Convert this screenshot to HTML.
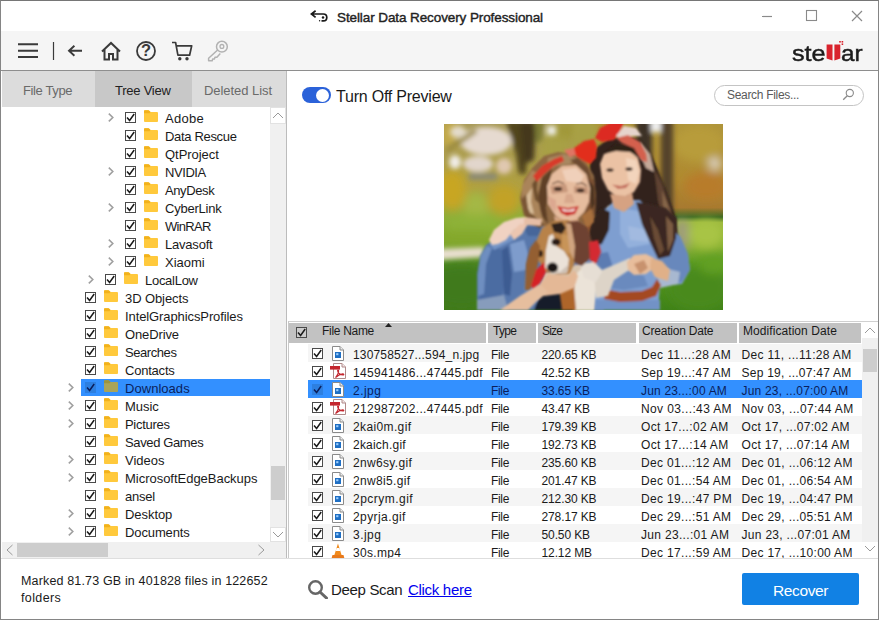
<!DOCTYPE html>
<html><head><meta charset="utf-8"><title>Stellar Data Recovery Professional</title>
<style>
*{box-sizing:border-box;margin:0;padding:0}
html,body{width:879px;height:620px;overflow:hidden;background:#fff}
body{font-family:"Liberation Sans",sans-serif;position:relative;color:#1a1a1a}
.ab{position:absolute;display:block}
.t{position:absolute;white-space:nowrap;display:block}
.tr{font-size:13px;line-height:18px}
.fr{font-size:12px;line-height:17px}
.cb{position:absolute;display:block}
.cb rect{fill:#fff;stroke:#4a4a4a;stroke-width:1}
.cb path{fill:none;stroke:#1a1a1a;stroke-width:1.5}
.cb.sel rect{fill:#2d7fe0;stroke:#2d7fe0}
.cb.sel path{stroke:#0b1f5c}
</style></head><body>
<!-- window frame -->
<div class="ab" style="left:0;top:0;width:879px;height:620px;border:1px solid #858585;border-top-color:#767676"></div>
<!-- title bar -->
<svg class="ab" style="left:310px;top:9px" width="19" height="14" viewBox="0 0 19 14"><path d="M5.600 1.800 1.400 5 5.600 8.400M1.800 5H13.300Q16.800 5 16.800 8.400Q16.800 11.800 13.300 11.800H11.500" fill="none" stroke="#1a1a1a" stroke-width="1.700"/><circle cx="13" cy="8.400" r="1.250" fill="#1a1a1a"/><circle cx="9.600" cy="11.700" r=".700" fill="#1a1a1a"/></svg>
<span class="t" id="title" style="left:337px;top:8.500px;font-size:13.500px;line-height:18px;color:#222;-webkit-text-stroke:.4px #222;letter-spacing:-0.098px;">Stellar Data Recovery Professional</span>
<svg class="ab" style="left:756px;top:6px" width="112" height="20" viewBox="0 0 112 20"><path d="M6 10.5H16" stroke="#8a8a8a" stroke-width="1.2"/><rect x="50.5" y="4.5" width="10" height="10" fill="none" stroke="#8a8a8a" stroke-width="1.1"/><path d="M96 5 106 15M106 5 96 15" stroke="#8a8a8a" stroke-width="1.2"/></svg>
<!-- toolbar -->
<div class="ab" style="left:1px;top:31px;width:877px;height:39px;background:#f5f5f5"></div>
<div class="ab" style="left:1px;top:70px;width:877px;height:1px;background:#8e8e8e"></div>
<svg class="ab" style="left:14px;top:38px" width="220" height="28" viewBox="0 0 220 28">
 <g fill="none" stroke="#3a3a3a" stroke-width="1.8">
  <path d="M4 6.300H24M4 12.750H24M4 19H24" stroke-width="2.100"/>
  <path d="M39.5 4V22" stroke-width="1.2"/>
  <path d="M68 12.750H55.500M60.400 7.700 55 12.750 60.400 17.800" stroke-width="1.900"/>
  <path d="M88 13.500 97 5 106 13.500M90.500 11.500V21.500H95V16H99V21.500H103.500V11.500" stroke-width="2"/>
  <circle cx="132" cy="13" r="9"/>
  <path d="M158 4.500H161.600L163.900 17.200H175.600L177.700 7.800H162.400" stroke-linejoin="round" stroke-width="1.700"/>
 </g>
 <circle cx="165.800" cy="20.800" r="1.700" fill="#3a3a3a"/><circle cx="173" cy="20.800" r="1.700" fill="#3a3a3a"/>
 <text x="132" y="18" text-anchor="middle" font-family="Liberation Sans, sans-serif" font-size="16.500" font-weight="bold" fill="#3a3a3a">?</text>
 <g fill="none" stroke="#b2b2b2" stroke-width="1.500" stroke-linejoin="round"><circle cx="207.900" cy="8.700" r="5.400"/><circle cx="207.900" cy="8.400" r="1.900" stroke-width="1.300"/><path d="M203.600 12 194.600 20.300V22.700H198.200L198.700 20.900H200.500L201 19.200H202.900L206.300 15.400"/></g>
</svg>
<!-- stellar logo -->
<span class="t" id="logo1" style="left:791.500px;top:39.500px;font-size:22.500px;line-height:28px;color:#1c1c1c;-webkit-text-stroke:.45px #1c1c1c;transform-origin:0 0;transform:scaleX(1.12)">ste</span>
<span class="t" id="logo2" style="left:841px;top:39.500px;font-size:22.500px;line-height:28px;color:#1c1c1c;-webkit-text-stroke:.45px #1c1c1c;transform-origin:0 0;transform:scaleX(1.08)">ar</span>
<svg class="ab" style="left:825px;top:39px" width="20" height="23" viewBox="0 0 20 23"><path d="M1.600 5.500H7.500V21.500L1.600 19.500Z" fill="#d9232d"/><path d="M9.400 5.500H15.300V19.500L9.400 21.500Z" fill="#d9232d"/><rect x="14.200" y="2" width="1.600" height="1.600" fill="#d9232d"/><rect x="16.600" y="2" width="1.600" height="1.600" fill="#d9232d"/><rect x="16.600" y="4.400" width="1.600" height="1.600" fill="#d9232d"/></svg>
<!-- tabs -->
<div class="ab" style="left:2px;top:71px;width:284px;height:36px;background:#dcdcdc"></div>
<div class="ab" style="left:95px;top:71px;width:97px;height:36px;background:#c8c8c8"></div>
<span class="t" id="tab1" style="left:23px;top:81.700px;font-size:13px;line-height:18px;color:#6a6a6a;letter-spacing:-0.368px;">File Type</span>
<span class="t" id="tab2" style="left:115px;top:81.700px;font-size:13px;line-height:18px;color:#222;letter-spacing:-0.246px;">Tree View</span>
<span class="t" id="tab3" style="left:204px;top:81.700px;font-size:13px;line-height:18px;color:#6a6a6a;letter-spacing:-0.055px;">Deleted List</span>
<!-- pane divider -->
<div class="ab" style="left:286px;top:71px;width:1px;height:488px;background:#bcbcbc"></div>
<!-- tree -->
<svg class="ab" style="left:108px;top:113px" width="6" height="9" viewBox="0 0 6 9"><path d="M.8 .6 4.8 4.5 .8 8.4" fill="none" stroke="#a0a0a0" stroke-width="1.6"/></svg>
<svg class="cb" style="left:125px;top:112px" width="11" height="11" viewBox="0 0 11 11"><rect x=".5" y=".5" width="10" height="10"/><path d="M2 5.4 4.6 8.5 9.2 2"/></svg>
<svg class="ab" style="left:144px;top:110px" width="14" height="12" viewBox="0 0 15 13" preserveAspectRatio="none"><path d="M0 1.2Q0 .2 1 .2H4.6Q5.4 .2 6 1L7 2.2H14Q15 2.2 15 3.2V12Q15 13 14 13H1Q0 13 0 12Z" fill="#ffc93c"/><path d="M0 1.2Q0 .2 1 .2H4.6Q5.4 .2 6 1L7 2.2L6 3.4H0Z" fill="#f2b21c"/></svg>
<span class="t tr" style="left:165px;top:110px;color:#1a1a1a;letter-spacing:0.281px;">Adobe</span>
<svg class="cb" style="left:125px;top:130px" width="11" height="11" viewBox="0 0 11 11"><rect x=".5" y=".5" width="10" height="10"/><path d="M2 5.4 4.6 8.5 9.2 2"/></svg>
<svg class="ab" style="left:144px;top:128px" width="14" height="12" viewBox="0 0 15 13" preserveAspectRatio="none"><path d="M0 1.2Q0 .2 1 .2H4.6Q5.4 .2 6 1L7 2.2H14Q15 2.2 15 3.2V12Q15 13 14 13H1Q0 13 0 12Z" fill="#ffc93c"/><path d="M0 1.2Q0 .2 1 .2H4.6Q5.4 .2 6 1L7 2.2L6 3.4H0Z" fill="#f2b21c"/></svg>
<span class="t tr" style="left:165px;top:128px;color:#1a1a1a;letter-spacing:-0.323px;">Data Rescue</span>
<svg class="cb" style="left:125px;top:148px" width="11" height="11" viewBox="0 0 11 11"><rect x=".5" y=".5" width="10" height="10"/><path d="M2 5.4 4.6 8.5 9.2 2"/></svg>
<svg class="ab" style="left:144px;top:146px" width="14" height="12" viewBox="0 0 15 13" preserveAspectRatio="none"><path d="M0 1.2Q0 .2 1 .2H4.6Q5.4 .2 6 1L7 2.2H14Q15 2.2 15 3.2V12Q15 13 14 13H1Q0 13 0 12Z" fill="#ffc93c"/><path d="M0 1.2Q0 .2 1 .2H4.6Q5.4 .2 6 1L7 2.2L6 3.4H0Z" fill="#f2b21c"/></svg>
<span class="t tr" style="left:165px;top:146px;color:#1a1a1a;letter-spacing:-0.043px;">QtProject</span>
<svg class="ab" style="left:108px;top:167px" width="6" height="9" viewBox="0 0 6 9"><path d="M.8 .6 4.8 4.5 .8 8.4" fill="none" stroke="#a0a0a0" stroke-width="1.6"/></svg>
<svg class="cb" style="left:125px;top:166px" width="11" height="11" viewBox="0 0 11 11"><rect x=".5" y=".5" width="10" height="10"/><path d="M2 5.4 4.6 8.5 9.2 2"/></svg>
<svg class="ab" style="left:144px;top:164px" width="14" height="12" viewBox="0 0 15 13" preserveAspectRatio="none"><path d="M0 1.2Q0 .2 1 .2H4.6Q5.4 .2 6 1L7 2.2H14Q15 2.2 15 3.2V12Q15 13 14 13H1Q0 13 0 12Z" fill="#ffc93c"/><path d="M0 1.2Q0 .2 1 .2H4.6Q5.4 .2 6 1L7 2.2L6 3.4H0Z" fill="#f2b21c"/></svg>
<span class="t tr" style="left:165px;top:164px;color:#1a1a1a;letter-spacing:-0.424px;">NVIDIA</span>
<svg class="cb" style="left:125px;top:184px" width="11" height="11" viewBox="0 0 11 11"><rect x=".5" y=".5" width="10" height="10"/><path d="M2 5.4 4.6 8.5 9.2 2"/></svg>
<svg class="ab" style="left:144px;top:182px" width="14" height="12" viewBox="0 0 15 13" preserveAspectRatio="none"><path d="M0 1.2Q0 .2 1 .2H4.6Q5.4 .2 6 1L7 2.2H14Q15 2.2 15 3.2V12Q15 13 14 13H1Q0 13 0 12Z" fill="#ffc93c"/><path d="M0 1.2Q0 .2 1 .2H4.6Q5.4 .2 6 1L7 2.2L6 3.4H0Z" fill="#f2b21c"/></svg>
<span class="t tr" style="left:165px;top:182px;color:#1a1a1a;letter-spacing:-0.390px;">AnyDesk</span>
<svg class="ab" style="left:108px;top:203px" width="6" height="9" viewBox="0 0 6 9"><path d="M.8 .6 4.8 4.5 .8 8.4" fill="none" stroke="#a0a0a0" stroke-width="1.6"/></svg>
<svg class="cb" style="left:125px;top:202px" width="11" height="11" viewBox="0 0 11 11"><rect x=".5" y=".5" width="10" height="10"/><path d="M2 5.4 4.6 8.5 9.2 2"/></svg>
<svg class="ab" style="left:144px;top:200px" width="14" height="12" viewBox="0 0 15 13" preserveAspectRatio="none"><path d="M0 1.2Q0 .2 1 .2H4.6Q5.4 .2 6 1L7 2.2H14Q15 2.2 15 3.2V12Q15 13 14 13H1Q0 13 0 12Z" fill="#ffc93c"/><path d="M0 1.2Q0 .2 1 .2H4.6Q5.4 .2 6 1L7 2.2L6 3.4H0Z" fill="#f2b21c"/></svg>
<span class="t tr" style="left:165px;top:200px;color:#1a1a1a;letter-spacing:-0.237px;">CyberLink</span>
<svg class="cb" style="left:125px;top:220px" width="11" height="11" viewBox="0 0 11 11"><rect x=".5" y=".5" width="10" height="10"/><path d="M2 5.4 4.6 8.5 9.2 2"/></svg>
<svg class="ab" style="left:144px;top:218px" width="14" height="12" viewBox="0 0 15 13" preserveAspectRatio="none"><path d="M0 1.2Q0 .2 1 .2H4.6Q5.4 .2 6 1L7 2.2H14Q15 2.2 15 3.2V12Q15 13 14 13H1Q0 13 0 12Z" fill="#ffc93c"/><path d="M0 1.2Q0 .2 1 .2H4.6Q5.4 .2 6 1L7 2.2L6 3.4H0Z" fill="#f2b21c"/></svg>
<span class="t tr" style="left:165px;top:218px;color:#1a1a1a;letter-spacing:-0.707px;">WinRAR</span>
<svg class="ab" style="left:108px;top:239px" width="6" height="9" viewBox="0 0 6 9"><path d="M.8 .6 4.8 4.5 .8 8.4" fill="none" stroke="#a0a0a0" stroke-width="1.6"/></svg>
<svg class="cb" style="left:125px;top:238px" width="11" height="11" viewBox="0 0 11 11"><rect x=".5" y=".5" width="10" height="10"/><path d="M2 5.4 4.6 8.5 9.2 2"/></svg>
<svg class="ab" style="left:144px;top:236px" width="14" height="12" viewBox="0 0 15 13" preserveAspectRatio="none"><path d="M0 1.2Q0 .2 1 .2H4.6Q5.4 .2 6 1L7 2.2H14Q15 2.2 15 3.2V12Q15 13 14 13H1Q0 13 0 12Z" fill="#ffc93c"/><path d="M0 1.2Q0 .2 1 .2H4.6Q5.4 .2 6 1L7 2.2L6 3.4H0Z" fill="#f2b21c"/></svg>
<span class="t tr" style="left:165px;top:236px;color:#1a1a1a;letter-spacing:-0.207px;">Lavasoft</span>
<svg class="ab" style="left:108px;top:257px" width="6" height="9" viewBox="0 0 6 9"><path d="M.8 .6 4.8 4.5 .8 8.4" fill="none" stroke="#a0a0a0" stroke-width="1.6"/></svg>
<svg class="cb" style="left:125px;top:256px" width="11" height="11" viewBox="0 0 11 11"><rect x=".5" y=".5" width="10" height="10"/><path d="M2 5.4 4.6 8.5 9.2 2"/></svg>
<svg class="ab" style="left:144px;top:254px" width="14" height="12" viewBox="0 0 15 13" preserveAspectRatio="none"><path d="M0 1.2Q0 .2 1 .2H4.6Q5.4 .2 6 1L7 2.2H14Q15 2.2 15 3.2V12Q15 13 14 13H1Q0 13 0 12Z" fill="#ffc93c"/><path d="M0 1.2Q0 .2 1 .2H4.6Q5.4 .2 6 1L7 2.2L6 3.4H0Z" fill="#f2b21c"/></svg>
<span class="t tr" style="left:165px;top:254px;color:#1a1a1a;letter-spacing:-0.008px;">Xiaomi</span>
<svg class="ab" style="left:88px;top:275px" width="6" height="9" viewBox="0 0 6 9"><path d="M.8 .6 4.8 4.5 .8 8.4" fill="none" stroke="#a0a0a0" stroke-width="1.6"/></svg>
<svg class="cb" style="left:105px;top:274px" width="11" height="11" viewBox="0 0 11 11"><rect x=".5" y=".5" width="10" height="10"/><path d="M2 5.4 4.6 8.5 9.2 2"/></svg>
<svg class="ab" style="left:124px;top:272px" width="14" height="12" viewBox="0 0 15 13" preserveAspectRatio="none"><path d="M0 1.2Q0 .2 1 .2H4.6Q5.4 .2 6 1L7 2.2H14Q15 2.2 15 3.2V12Q15 13 14 13H1Q0 13 0 12Z" fill="#ffc93c"/><path d="M0 1.2Q0 .2 1 .2H4.6Q5.4 .2 6 1L7 2.2L6 3.4H0Z" fill="#f2b21c"/></svg>
<span class="t tr" style="left:145px;top:272px;color:#1a1a1a;letter-spacing:-0.280px;">LocalLow</span>
<svg class="cb" style="left:85px;top:292px" width="11" height="11" viewBox="0 0 11 11"><rect x=".5" y=".5" width="10" height="10"/><path d="M2 5.4 4.6 8.5 9.2 2"/></svg>
<svg class="ab" style="left:104px;top:290px" width="14" height="12" viewBox="0 0 15 13" preserveAspectRatio="none"><path d="M0 1.2Q0 .2 1 .2H4.6Q5.4 .2 6 1L7 2.2H14Q15 2.2 15 3.2V12Q15 13 14 13H1Q0 13 0 12Z" fill="#ffc93c"/><path d="M0 1.2Q0 .2 1 .2H4.6Q5.4 .2 6 1L7 2.2L6 3.4H0Z" fill="#f2b21c"/></svg>
<span class="t tr" style="left:125px;top:290px;color:#1a1a1a;letter-spacing:-0.091px;">3D Objects</span>
<svg class="cb" style="left:85px;top:310px" width="11" height="11" viewBox="0 0 11 11"><rect x=".5" y=".5" width="10" height="10"/><path d="M2 5.4 4.6 8.5 9.2 2"/></svg>
<svg class="ab" style="left:104px;top:308px" width="14" height="12" viewBox="0 0 15 13" preserveAspectRatio="none"><path d="M0 1.2Q0 .2 1 .2H4.6Q5.4 .2 6 1L7 2.2H14Q15 2.2 15 3.2V12Q15 13 14 13H1Q0 13 0 12Z" fill="#ffc93c"/><path d="M0 1.2Q0 .2 1 .2H4.6Q5.4 .2 6 1L7 2.2L6 3.4H0Z" fill="#f2b21c"/></svg>
<span class="t tr" style="left:125px;top:308px;color:#1a1a1a;letter-spacing:-0.098px;">IntelGraphicsProfiles</span>
<svg class="cb" style="left:85px;top:328px" width="11" height="11" viewBox="0 0 11 11"><rect x=".5" y=".5" width="10" height="10"/><path d="M2 5.4 4.6 8.5 9.2 2"/></svg>
<svg class="ab" style="left:104px;top:326px" width="14" height="12" viewBox="0 0 15 13" preserveAspectRatio="none"><path d="M0 1.2Q0 .2 1 .2H4.6Q5.4 .2 6 1L7 2.2H14Q15 2.2 15 3.2V12Q15 13 14 13H1Q0 13 0 12Z" fill="#ffc93c"/><path d="M0 1.2Q0 .2 1 .2H4.6Q5.4 .2 6 1L7 2.2L6 3.4H0Z" fill="#f2b21c"/></svg>
<span class="t tr" style="left:125px;top:326px;color:#1a1a1a;letter-spacing:-0.128px;">OneDrive</span>
<svg class="cb" style="left:85px;top:346px" width="11" height="11" viewBox="0 0 11 11"><rect x=".5" y=".5" width="10" height="10"/><path d="M2 5.4 4.6 8.5 9.2 2"/></svg>
<svg class="ab" style="left:104px;top:344px" width="14" height="12" viewBox="0 0 15 13" preserveAspectRatio="none"><path d="M0 1.2Q0 .2 1 .2H4.6Q5.4 .2 6 1L7 2.2H14Q15 2.2 15 3.2V12Q15 13 14 13H1Q0 13 0 12Z" fill="#ffc93c"/><path d="M0 1.2Q0 .2 1 .2H4.6Q5.4 .2 6 1L7 2.2L6 3.4H0Z" fill="#f2b21c"/></svg>
<span class="t tr" style="left:125px;top:344px;color:#1a1a1a;letter-spacing:-0.428px;">Searches</span>
<svg class="cb" style="left:85px;top:364px" width="11" height="11" viewBox="0 0 11 11"><rect x=".5" y=".5" width="10" height="10"/><path d="M2 5.4 4.6 8.5 9.2 2"/></svg>
<svg class="ab" style="left:104px;top:362px" width="14" height="12" viewBox="0 0 15 13" preserveAspectRatio="none"><path d="M0 1.2Q0 .2 1 .2H4.6Q5.4 .2 6 1L7 2.2H14Q15 2.2 15 3.2V12Q15 13 14 13H1Q0 13 0 12Z" fill="#ffc93c"/><path d="M0 1.2Q0 .2 1 .2H4.6Q5.4 .2 6 1L7 2.2L6 3.4H0Z" fill="#f2b21c"/></svg>
<span class="t tr" style="left:125px;top:362px;color:#1a1a1a;letter-spacing:-0.214px;">Contacts</span>
<div class="ab" style="left:81px;top:379px;width:189px;height:17px;background:#3390ff"></div>
<svg class="ab" style="left:68px;top:383px" width="6" height="9" viewBox="0 0 6 9"><path d="M.8 .6 4.8 4.5 .8 8.4" fill="none" stroke="#a0a0a0" stroke-width="1.6"/></svg>
<svg class="cb sel" style="left:85px;top:382px" width="11" height="11" viewBox="0 0 11 11"><rect x=".5" y=".5" width="10" height="10"/><path d="M2 5.4 4.6 8.5 9.2 2"/></svg>
<svg class="ab" style="left:104px;top:380px" width="14" height="12" viewBox="0 0 15 13" preserveAspectRatio="none"><path d="M0 1.2Q0 .2 1 .2H4.6Q5.4 .2 6 1L7 2.2H14Q15 2.2 15 3.2V12Q15 13 14 13H1Q0 13 0 12Z" fill="#a9a45a"/><path d="M0 1.2Q0 .2 1 .2H4.6Q5.4 .2 6 1L7 2.2L6 3.4H0Z" fill="#9a9440"/></svg>
<span class="t tr" style="left:125px;top:380px;color:#0b1f5c;letter-spacing:0.041px;">Downloads</span>
<svg class="ab" style="left:68px;top:401px" width="6" height="9" viewBox="0 0 6 9"><path d="M.8 .6 4.8 4.5 .8 8.4" fill="none" stroke="#a0a0a0" stroke-width="1.6"/></svg>
<svg class="cb" style="left:85px;top:400px" width="11" height="11" viewBox="0 0 11 11"><rect x=".5" y=".5" width="10" height="10"/><path d="M2 5.4 4.6 8.5 9.2 2"/></svg>
<svg class="ab" style="left:104px;top:398px" width="14" height="12" viewBox="0 0 15 13" preserveAspectRatio="none"><path d="M0 1.2Q0 .2 1 .2H4.6Q5.4 .2 6 1L7 2.2H14Q15 2.2 15 3.2V12Q15 13 14 13H1Q0 13 0 12Z" fill="#ffc93c"/><path d="M0 1.2Q0 .2 1 .2H4.6Q5.4 .2 6 1L7 2.2L6 3.4H0Z" fill="#f2b21c"/></svg>
<span class="t tr" style="left:125px;top:398px;color:#1a1a1a;letter-spacing:-0.051px;">Music</span>
<svg class="ab" style="left:68px;top:419px" width="6" height="9" viewBox="0 0 6 9"><path d="M.8 .6 4.8 4.5 .8 8.4" fill="none" stroke="#a0a0a0" stroke-width="1.6"/></svg>
<svg class="cb" style="left:85px;top:418px" width="11" height="11" viewBox="0 0 11 11"><rect x=".5" y=".5" width="10" height="10"/><path d="M2 5.4 4.6 8.5 9.2 2"/></svg>
<svg class="ab" style="left:104px;top:416px" width="14" height="12" viewBox="0 0 15 13" preserveAspectRatio="none"><path d="M0 1.2Q0 .2 1 .2H4.6Q5.4 .2 6 1L7 2.2H14Q15 2.2 15 3.2V12Q15 13 14 13H1Q0 13 0 12Z" fill="#ffc93c"/><path d="M0 1.2Q0 .2 1 .2H4.6Q5.4 .2 6 1L7 2.2L6 3.4H0Z" fill="#f2b21c"/></svg>
<span class="t tr" style="left:125px;top:416px;color:#1a1a1a;letter-spacing:-0.296px;">Pictures</span>
<svg class="cb" style="left:85px;top:436px" width="11" height="11" viewBox="0 0 11 11"><rect x=".5" y=".5" width="10" height="10"/><path d="M2 5.4 4.6 8.5 9.2 2"/></svg>
<svg class="ab" style="left:104px;top:434px" width="14" height="12" viewBox="0 0 15 13" preserveAspectRatio="none"><path d="M0 1.2Q0 .2 1 .2H4.6Q5.4 .2 6 1L7 2.2H14Q15 2.2 15 3.2V12Q15 13 14 13H1Q0 13 0 12Z" fill="#ffc93c"/><path d="M0 1.2Q0 .2 1 .2H4.6Q5.4 .2 6 1L7 2.2L6 3.4H0Z" fill="#f2b21c"/></svg>
<span class="t tr" style="left:125px;top:434px;color:#1a1a1a;letter-spacing:-0.370px;">Saved Games</span>
<svg class="ab" style="left:68px;top:455px" width="6" height="9" viewBox="0 0 6 9"><path d="M.8 .6 4.8 4.5 .8 8.4" fill="none" stroke="#a0a0a0" stroke-width="1.6"/></svg>
<svg class="cb" style="left:85px;top:454px" width="11" height="11" viewBox="0 0 11 11"><rect x=".5" y=".5" width="10" height="10"/><path d="M2 5.4 4.6 8.5 9.2 2"/></svg>
<svg class="ab" style="left:104px;top:452px" width="14" height="12" viewBox="0 0 15 13" preserveAspectRatio="none"><path d="M0 1.2Q0 .2 1 .2H4.6Q5.4 .2 6 1L7 2.2H14Q15 2.2 15 3.2V12Q15 13 14 13H1Q0 13 0 12Z" fill="#ffc93c"/><path d="M0 1.2Q0 .2 1 .2H4.6Q5.4 .2 6 1L7 2.2L6 3.4H0Z" fill="#f2b21c"/></svg>
<span class="t tr" style="left:125px;top:452px;color:#1a1a1a;letter-spacing:-0.003px;">Videos</span>
<svg class="ab" style="left:68px;top:473px" width="6" height="9" viewBox="0 0 6 9"><path d="M.8 .6 4.8 4.5 .8 8.4" fill="none" stroke="#a0a0a0" stroke-width="1.6"/></svg>
<svg class="cb" style="left:85px;top:472px" width="11" height="11" viewBox="0 0 11 11"><rect x=".5" y=".5" width="10" height="10"/><path d="M2 5.4 4.6 8.5 9.2 2"/></svg>
<svg class="ab" style="left:104px;top:470px" width="14" height="12" viewBox="0 0 15 13" preserveAspectRatio="none"><path d="M0 1.2Q0 .2 1 .2H4.6Q5.4 .2 6 1L7 2.2H14Q15 2.2 15 3.2V12Q15 13 14 13H1Q0 13 0 12Z" fill="#ffc93c"/><path d="M0 1.2Q0 .2 1 .2H4.6Q5.4 .2 6 1L7 2.2L6 3.4H0Z" fill="#f2b21c"/></svg>
<span class="t tr" style="left:125px;top:470px;color:#1a1a1a;letter-spacing:-0.023px;">MicrosoftEdgeBackups</span>
<svg class="cb" style="left:85px;top:490px" width="11" height="11" viewBox="0 0 11 11"><rect x=".5" y=".5" width="10" height="10"/><path d="M2 5.4 4.6 8.5 9.2 2"/></svg>
<svg class="ab" style="left:104px;top:488px" width="14" height="12" viewBox="0 0 15 13" preserveAspectRatio="none"><path d="M0 1.2Q0 .2 1 .2H4.6Q5.4 .2 6 1L7 2.2H14Q15 2.2 15 3.2V12Q15 13 14 13H1Q0 13 0 12Z" fill="#ffc93c"/><path d="M0 1.2Q0 .2 1 .2H4.6Q5.4 .2 6 1L7 2.2L6 3.4H0Z" fill="#f2b21c"/></svg>
<span class="t tr" style="left:125px;top:488px;color:#1a1a1a;letter-spacing:-0.236px;">ansel</span>
<svg class="ab" style="left:68px;top:509px" width="6" height="9" viewBox="0 0 6 9"><path d="M.8 .6 4.8 4.5 .8 8.4" fill="none" stroke="#a0a0a0" stroke-width="1.6"/></svg>
<svg class="cb" style="left:85px;top:508px" width="11" height="11" viewBox="0 0 11 11"><rect x=".5" y=".5" width="10" height="10"/><path d="M2 5.4 4.6 8.5 9.2 2"/></svg>
<svg class="ab" style="left:104px;top:506px" width="14" height="12" viewBox="0 0 15 13" preserveAspectRatio="none"><path d="M0 1.2Q0 .2 1 .2H4.6Q5.4 .2 6 1L7 2.2H14Q15 2.2 15 3.2V12Q15 13 14 13H1Q0 13 0 12Z" fill="#ffc93c"/><path d="M0 1.2Q0 .2 1 .2H4.6Q5.4 .2 6 1L7 2.2L6 3.4H0Z" fill="#f2b21c"/></svg>
<span class="t tr" style="left:125px;top:506px;color:#1a1a1a;letter-spacing:-0.058px;">Desktop</span>
<svg class="ab" style="left:68px;top:527px" width="6" height="9" viewBox="0 0 6 9"><path d="M.8 .6 4.8 4.5 .8 8.4" fill="none" stroke="#a0a0a0" stroke-width="1.6"/></svg>
<svg class="cb" style="left:85px;top:526px" width="11" height="11" viewBox="0 0 11 11"><rect x=".5" y=".5" width="10" height="10"/><path d="M2 5.4 4.6 8.5 9.2 2"/></svg>
<svg class="ab" style="left:104px;top:524px" width="14" height="12" viewBox="0 0 15 13" preserveAspectRatio="none"><path d="M0 1.2Q0 .2 1 .2H4.6Q5.4 .2 6 1L7 2.2H14Q15 2.2 15 3.2V12Q15 13 14 13H1Q0 13 0 12Z" fill="#ffc93c"/><path d="M0 1.2Q0 .2 1 .2H4.6Q5.4 .2 6 1L7 2.2L6 3.4H0Z" fill="#f2b21c"/></svg>
<span class="t tr" style="left:125px;top:524px;color:#1a1a1a;letter-spacing:-0.117px;">Documents</span>
<!-- tree v scrollbar -->
<div class="ab" style="left:270px;top:107px;width:16px;height:451px;background:#f0f0f0"></div>
<div class="ab" style="left:271px;top:466px;width:14px;height:34px;background:#cdcdcd"></div>
<svg class="ab" style="left:270px;top:107px" width="16" height="17"><rect x=".5" y=".5" width="15" height="16" fill="#fff" stroke="#e2e2e2"/><path d="M3 11 8 6 13 11" fill="none" stroke="#9a9a9a" stroke-width="1"/></svg>
<svg class="ab" style="left:270px;top:527px" width="16" height="15"><rect x=".5" y=".5" width="15" height="14" fill="#fff" stroke="#e2e2e2"/><path d="M3 5 8 10 13 5" fill="none" stroke="#9a9a9a" stroke-width="1"/></svg>
<!-- tree h scrollbar -->
<div class="ab" style="left:2px;top:542px;width:268px;height:16px;background:#f0f0f0"></div>
<div class="ab" style="left:17px;top:543px;width:91px;height:14px;background:#cdcdcd"></div>
<svg class="ab" style="left:2px;top:542px" width="16" height="16"><path d="M10.500 3 5 8 10.500 13" fill="none" stroke="#9a9a9a" stroke-width="1"/></svg>
<svg class="ab" style="left:253px;top:542px" width="16" height="16"><path d="M5.500 3 11 8 5.500 13" fill="none" stroke="#9a9a9a" stroke-width="1"/></svg>
<!-- bottom separator -->
<div class="ab" style="left:1px;top:558px;width:877px;height:1px;background:#dedede"></div>
<!-- status -->
<span class="t" id="st1" style="left:21px;top:573px;font-size:12.500px;line-height:17px;color:#1a1a1a;letter-spacing:0.155px;">Marked 81.73 GB in 401828 files in 122652</span>
<span class="t" id="st2" style="left:21px;top:590px;font-size:12.500px;line-height:17px;color:#1a1a1a;letter-spacing:0.381px;">folders</span>
<!-- preview toggle -->
<div class="ab" style="left:302px;top:87px;width:29px;height:16px;border-radius:8px;background:#2b62d9"></div>
<div class="ab" style="left:316px;top:88.500px;width:13px;height:13px;border-radius:50%;background:#fff"></div>
<span class="t" id="turn" style="left:336px;top:85.500px;font-size:16px;line-height:22px;color:#1a1a1a;letter-spacing:-0.216px;">Turn Off Preview</span>
<!-- search -->
<div class="ab" style="left:714px;top:85px;width:150px;height:21px;border:1px solid #c4c4c4;border-radius:10.500px;background:#fff"></div>
<span class="t" id="search" style="left:727px;top:87px;font-size:12px;line-height:17px;color:#5a5a5a;letter-spacing:-0.314px;">Search Files...</span>
<svg class="ab" style="left:842px;top:88px" width="13" height="13" viewBox="0 0 13 13"><circle cx="7.800" cy="5" r="3.600" fill="none" stroke="#8a8a8a" stroke-width="1.100"/><path d="M5.300 7.700 1.200 11.800" stroke="#8a8a8a" stroke-width="1.300"/></svg>
<!-- photo -->
<svg class="ab" style="left:444px;top:124px" width="279" height="186" viewBox="0 0 279 186">
<defs>
<filter id="b6" x="-20%" y="-20%" width="140%" height="140%"><feGaussianBlur stdDeviation="5"/></filter>
<filter id="b3" x="-20%" y="-20%" width="140%" height="140%"><feGaussianBlur stdDeviation="2.600"/></filter>
<filter id="b1" x="-10%" y="-10%" width="120%" height="120%"><feGaussianBlur stdDeviation="1.100"/></filter>
<filter id="b0" x="-10%" y="-10%" width="120%" height="120%"><feGaussianBlur stdDeviation=".600"/></filter>
<clipPath id="pc"><rect width="279" height="186"/></clipPath>
<linearGradient id="bgL" x1="0" y1="0" x2="0" y2="1"><stop offset="0" stop-color="#a89a58"/><stop offset=".35" stop-color="#b0a040"/><stop offset=".5" stop-color="#8fae38"/><stop offset=".66" stop-color="#7aa42c"/><stop offset=".75" stop-color="#4f8a20"/><stop offset="1" stop-color="#3f7a18"/></linearGradient>
<linearGradient id="bgR" x1="0" y1="0" x2="0" y2="1"><stop offset="0" stop-color="#ae943a"/><stop offset=".3" stop-color="#b08a30"/><stop offset=".45" stop-color="#a87a30"/><stop offset=".5" stop-color="#3c6a22"/><stop offset=".53" stop-color="#9cb83c"/><stop offset=".66" stop-color="#86b030"/><stop offset=".75" stop-color="#5a9a22"/><stop offset="1" stop-color="#3f8218"/></linearGradient>
</defs>
<g clip-path="url(#pc)">
<rect width="140" height="186" fill="url(#bgL)"/>
<rect x="140" width="139" height="186" fill="url(#bgR)"/>
<!-- background blobs left -->
<g filter="url(#b6)">
 <ellipse cx="6" cy="10" rx="10" ry="14" fill="#c4aa48"/>
 <ellipse cx="112" cy="22" rx="16" ry="22" fill="#a8a044"/>
 <ellipse cx="128" cy="6" rx="20" ry="8" fill="#a09838"/>
 <ellipse cx="8" cy="66" rx="14" ry="20" fill="#c8a622"/>
 <ellipse cx="60" cy="76" rx="16" ry="15" fill="#c2a228"/>
 <ellipse cx="32" cy="84" rx="12" ry="16" fill="#a4b844"/>
 <ellipse cx="30" cy="100" rx="30" ry="10" fill="#8eb238"/>
 <ellipse cx="18" cy="162" rx="40" ry="22" fill="#3f7a1a"/>
 <ellipse cx="20" cy="113" rx="36" ry="7" fill="#84a82c"/>
</g>
<g filter="url(#b3)">
 <ellipse cx="42" cy="17" rx="26" ry="14" fill="#e6dad0"/>
 <ellipse cx="11" cy="38" rx="6" ry="7" fill="#f0ece6"/>
 <ellipse cx="34" cy="40" rx="15" ry="8" fill="#e2d6cc"/>
 <ellipse cx="60" cy="42" rx="8" ry="8" fill="#e0c8b0"/>
 <ellipse cx="14" cy="8" rx="8" ry="6" fill="#e4dccc"/>
 <rect x="25" y="49" width="28" height="7" fill="#8c8a74"/>
 <path d="M62 -3 76 -3 83 30 82 50 75 50 72 30Z" fill="#51441f"/>
 <path d="M76 -3 92 -3 90 36 80 40Z" fill="#44391c"/>
 <path d="M2 24 30 5 34 8 4 29Z" fill="#9a8a40"/>
 <path d="M90 -3 100 -3 98 16 92 20Z" fill="#7a7a34"/>
 <rect x="103" y="2" width="9" height="9" fill="#eeeee8"/>
 <path d="M-6 125 40 123 40 133 -6 136Z" fill="#e9dfcf"/>
</g>
<!-- background blobs right -->
<g filter="url(#b6)">
 <ellipse cx="255" cy="20" rx="26" ry="18" fill="#b89c3a"/>
 <ellipse cx="262" cy="62" rx="22" ry="14" fill="#b87c2c"/>
 <ellipse cx="271" cy="40" rx="7" ry="6" fill="#e0d8d0"/>
 <ellipse cx="262" cy="110" rx="18" ry="14" fill="#a8c444"/>
 <rect x="232" y="96" width="12" height="30" fill="#a09a80"/>
 <ellipse cx="255" cy="165" rx="30" ry="22" fill="#4a8a1c"/>
 <ellipse cx="270" cy="140" rx="16" ry="10" fill="#62a024"/>
</g>
<g filter="url(#b3)">
 <rect x="192" y="-4" width="16" height="50" fill="#3c3026"/>
 <rect x="207" y="-4" width="11" height="12" fill="#f0f0f0"/>
 <rect x="217" y="-4" width="12" height="96" fill="#54422a"/>
 <ellipse cx="141" cy="10" rx="13" ry="18" fill="#a8a044"/>
</g>
<!-- woman denim jacket -->
<g filter="url(#b1)">
 <path d="M60 186 70 110 100 96 150 100 160 130 160 186Z" fill="#6a7ea8"/>
 <path d="M96 150 136 140 150 150 150 186 96 186Z" fill="#d8c4ae"/>
 <path d="M33 186 33 150 36 132 42 121 56 112 76 103 90 98 100 104 104 120 100 150 96 170 90 186Z" fill="#5878ac"/>
 <path d="M35 186 35 150 40 130 50 122 58 126 62 150 58 172 60 186Z" fill="#4c6ca2"/>
 <path d="M66 120 80 116 84 130 82 146 70 148Z" fill="#7e9ccc"/>
 <path d="M58 126 64 122 68 150 66 172 60 170Z" fill="#3e5c92"/><path d="M34 150 37 132 43 122 48 124 42 140 40 170 34 172Z" fill="#6e8ec0"/><path d="M46 120 58 112 72 108 70 116 58 122 50 126Z" fill="#7494c6"/>
 <path d="M78 100 92 97 98 104 94 112 84 112Z" fill="#46669a"/>
 <path d="M33 176 60 171 64 186 33 186Z" fill="#879cbc"/>
 <path d="M82 150 94 146 98 160 88 170 80 168Z" fill="#6484b6"/>
 <!-- dark shirt -->
 <path d="M90 186 96 170 112 166 128 168 130 186Z" fill="#181a2a"/>
</g>
<!-- girl hair back -->
<g filter="url(#b1)">
 <path d="M146 40 152 24 164 15 182 12 196 16 206 28 214 46 222 66 230 88 234 112 230 132 216 136 208 116 200 90 192 80 164 82 158 100 152 114 144 120 138 104 142 76Z" fill="#33241c"/>
 <path d="M210 44 218 60 227 86 232 110 229 130 223 130 220 104 214 76Z" fill="#5e4230"/>
 <path d="M196 18 206 30 210 48 202 44 196 30Z" fill="#c4a898"/>
 <path d="M218 66 225 84 230 106 228 120 224 100 219 82Z" fill="#866648"/>
 <path d="M136 92 146 86 152 96 150 110 142 114Z" fill="#9a5a30"/>
</g>
<!-- girl dress -->
<g filter="url(#b1)">
 <path d="M154 100 162 84 172 76 196 76 206 88 220 100 236 112 244 130 246 146 238 160 216 162 214 186 150 186 150 160 152 130Z" fill="#7e9ed0"/>
 <path d="M216 102 236 112 244 130 246 146 238 158 224 160 214 140 212 118Z" fill="#6888bc"/>
 <path d="M212 142 236 148 234 160 216 164Z" fill="#a8b8d0"/>
 <path d="M176 84 200 88 204 104 206 120 184 124 176 110Z" fill="#93b0dc"/>
 <path d="M184 102 204 106 204 118 186 116Z" fill="#a2bae0"/>
 <path d="M152 130 164 128 170 146 160 150 152 150Z" fill="#5c7cb2"/>
 <path d="M150 176 216 176 216 186 150 186Z" fill="#7292c6"/>
 <path d="M164 150 184 146 200 152 204 162 180 166 162 164Z" fill="#6a8abe"/>
 <!-- belt -->
 <path d="M160 165 176 168 198 167 208 163 213 155 217 161 212 172 198 177 176 178 160 175Z" fill="#a44a22"/>
 <!-- hair strands over dress -->
 <path d="M192 78 206 80 222 84 233 94 232 114 226 132 214 135 206 118 198 100Z" fill="#3a2820"/><path d="M206 92 214 106 220 126 216 131 210 114Z" fill="#6a4c36"/><path d="M222 92 229 100 229 116 224 128 223 110Z" fill="#7c5c42"/>
 <path d="M148 96 158 84 166 88 165 106 158 120 150 122 143 118Z" fill="#33241c"/>
</g>
<!-- girl face -->
<g filter="url(#b1)">
 <path d="M156 40 160 30 172 26 186 27 194 34 197 46 196 58 190 68 182 72 172 72 164 66 158 54Z" fill="#ebc2a4"/>
 <path d="M182 34 192 36 195 48 192 60 184 56Z" fill="#f3d4bc"/>
 <path d="M166 70 182 72 188 68 190 80 180 88 170 84Z" fill="#d6a282"/>
 <path d="M168 60.500 177 62 186 59 182 64 174 65Z" fill="#c4705e"/>
 <ellipse cx="166" cy="46" rx="3.600" ry="1.800" fill="#3e2a20"/><ellipse cx="185" cy="45" rx="3.600" ry="1.800" fill="#3e2a20"/>
 <path d="M160 30 172 20 188 22 196 34 186 28 172 27Z" fill="#2e2018"/>
 <!-- girl bandana -->
 <path d="M151 14 156 4 168 -2 180 -2 176 8 170 16 158 18Z" fill="#dc2c20"/>
 <path d="M172 12 180 2 192 4 198 12 188 12 178 16Z" fill="#e6d4cc"/>
 <path d="M172 14 184 11 196 18 202 30 203 38 197 36 190 24 178 19Z" fill="#d4604e"/>
</g>
<!-- woman hair -->
<g filter="url(#b1)">
 <path d="M88 44 100 32 114 28 128 30 142 38 150 52 152 72 151 92 146 102 136 104 104 104 90 100 80 92 76 74 80 56Z" fill="#8e6842"/>
 <path d="M78 62 88 46 98 52 94 68 96 86 100 100 88 98 78 84Z" fill="#aa845a"/>
 <path d="M98 54 108 44 104 66 102 84 104 100 98 92 94 74Z" fill="#5e4028"/>
 <path d="M82 72 88 64 87 78 90 90 84 88Z" fill="#d8bc98"/><path d="M88 60 94 52 93 66 96 80 91 76Z" fill="#70502f"/><path d="M80 86 90 92 100 100 96 104 84 98Z" fill="#6a4a2c"/>
 <path d="M104 34 120 30 132 34 126 40 112 42 102 48Z" fill="#a88860"/><path d="M126 36 134 34 144 44 148 56 142 50 134 42Z" fill="#6e4c30"/>
 <path d="M142 52 150 56 152 76 150 94 142 102 138 96 144 80Z" fill="#7a5030"/>
 <path d="M138 92 148 84 150 98 142 104Z" fill="#a8703e"/><path d="M144 56 150 62 151 80 147 86 146 70Z" fill="#4e3422"/><path d="M77 76 82 70 84 84 88 94 80 90Z" fill="#7a5634"/>
 <!-- face -->
 <path d="M103 62 108 50 118 42 132 41 142 50 146 64 145 78 140 88 132 96 122 98 112 92 104 80Z" fill="#e6bc9e"/>
 <path d="M118 46 132 44 140 52 136 59 122 57Z" fill="#f0d0ba"/><path d="M106 62 122 60 124 68 108 70Z" fill="#c8987c"/><path d="M130 62 144 63 144 70 130 69Z" fill="#c8987c"/><path d="M122 70 128 70 131 79 120 79Z" fill="#d8a88c"/><path d="M104 72 112 76 112 88 106 82Z" fill="#dca890"/>
 <path d="M110 92 124 98 134 94 134 100 112 100Z" fill="#d8a888"/>
 <path d="M113 82 124 84 135 82 131 90 123 92 117 89Z" fill="#cc2a28"/>
 <path d="M117 84.500 124 86 132 84.500 129 87.500 120 87.500Z" fill="#f6ece8"/>
 <ellipse cx="114" cy="65" rx="4.200" ry="1.900" fill="#3e2a20"/><ellipse cx="136.500" cy="66.500" rx="4" ry="1.900" fill="#3e2a20"/>
 <path d="M108 60 114 57.500 120 59.500M132 60 138 59 143 62" stroke="#6a4a38" stroke-width="1.200" fill="none"/>
 <!-- headband + bow -->
 <path d="M89 52 98 42 110 35 118 32 120 37 110 42 100 50 93 58Z" fill="#d83a2a"/>
 <path d="M120 26 130 24 134 30 126 33Z" fill="#e07464"/>
 <path d="M130 24 140 17 150 15 153 22 152 34 146 40 138 36 132 32Z" fill="#e22e1e"/>
</g>
<!-- girl's hand on shoulder -->
<g filter="url(#b1)">
 <path d="M45 116 50 106 60 98 72 94 82 93 80 100 70 106 62 116 54 120 48 121Z" fill="#f0d2c2"/>
 <path d="M66 110 76 100 84 100 78 110 70 116Z" fill="#ecc6b0"/>
 <path d="M80 93 98 95 97 102 80 101Z" fill="#e6bea6"/>
</g>
<!-- dog -->
<g filter="url(#b1)">
 <path d="M130 152 140 142 150 138 158 146 158 158 152 166 150 186 130 186 128 166Z" fill="#ebe3d8"/>
 <path d="M150 150 158 146 186 134 188 144 170 156 164 172 152 174Z" fill="#ddd4c8"/>
 <path d="M136 140 150 138 158 148 152 158 140 154Z" fill="#e6ded4"/>
 <path d="M115 164 130 162 132 186 118 186Z" fill="#ae652c"/>
 <!-- head -->
 <path d="M92 118 98 104 110 97 124 96 132 102 134 120 130 140 126 150 112 152 102 148 94 136Z" fill="#b88248"/>
 <path d="M107 100 118 98 122 104 118 110 110 108Z" fill="#2e221c"/>
 <path d="M102 126 105 112 109 110 112 122 120 127 125 135 123 149 108 151 101 143Z" fill="#ebe2d8"/><path d="M101 140 108 151 123 149 125 140 116 148Z" fill="#cfc2b6"/><path d="M118 110 128 112 130 126 124 130 118 124Z" fill="#c89458"/>
 <ellipse cx="108.500" cy="143.500" rx="5.500" ry="5" fill="#1c1616"/>
 <ellipse cx="112" cy="118" rx="4.500" ry="3.500" fill="#2a1c14"/><ellipse cx="96" cy="129.500" rx="3" ry="3.500" fill="#2a1c14"/>
 <path d="M81 166 82 140 86 124 92 116 96 122 94 140 90 156 86 166Z" fill="#945e30"/>
 <path d="M122 98 134 97 144 104 148 118 146 134 138 142 130 138 128 120Z" fill="#6e4230"/>
 <path d="M122 99 127 100 131 122 130 136 126 128Z" fill="#d0a480"/>
 <!-- bandana dog -->
 <path d="M87 162 92 146 100 138 102 148 96 160 90 166Z" fill="#d62228"/>
 <path d="M145 118 154 116 157 128 152 140 146 136Z" fill="#d42a30"/>
</g>
<!-- hands -->
<g filter="url(#b1)">
 <path d="M96 160 104 150 124 152 130 146 134 152 130 164 116 170 100 172Z" fill="#e4b896"/>
 <path d="M56 186 76 172 96 160 104 168 92 178 84 186Z" fill="#e6be9e"/>
 <path d="M183 138 190 131 202 130 210 134 210 144 202 150 190 151 184 146Z" fill="#e8be9c"/>
 <path d="M190 140 200 136 204 144 196 150Z" fill="#c8926e"/>
 <path d="M207 134 218 137 226 146 224 157 211 153 206 144Z" fill="#e0b088"/>
</g>
</g>
</svg>

<!-- file list -->
<div class="ab" style="left:288px;top:321px;width:590px;height:1px;background:#d0d0d0"></div>
<div class="ab" style="left:288px;top:321px;width:1px;height:237px;background:#c8c8c8"></div>
<div class="ab" style="left:289px;top:323px;width:197px;height:20px;background:#c2c2c2"></div>
<div class="ab" style="left:488px;top:323px;width:48px;height:20px;background:#c2c2c2"></div>
<div class="ab" style="left:538px;top:323px;width:98px;height:20px;background:#c2c2c2"></div>
<div class="ab" style="left:639px;top:323px;width:98px;height:20px;background:#c2c2c2"></div>
<div class="ab" style="left:739px;top:323px;width:122px;height:20px;background:#c2c2c2"></div>
<svg class="cb" style="left:296px;top:327px" width="11" height="11" viewBox="0 0 11 11"><rect x=".5" y=".5" width="10" height="10" style="fill:#cccccc"/><path d="M2 5.400 4.600 8.500 9.200 2"/></svg>
<svg class="ab" style="left:385px;top:323px" width="7" height="4"><path d="M0 4 3.500 0 7 4Z" fill="#222"/></svg>
<span class="t" id="h1" style="left:322px;top:322.500px;font-size:12px;line-height:17px;color:#1a1a1a;letter-spacing:-0.299px;">File Name</span>
<span class="t" id="h2" style="left:493px;top:322.500px;font-size:12px;line-height:17px;color:#1a1a1a;letter-spacing:-0.705px;">Type</span>
<span class="t" id="h3" style="left:542px;top:322.500px;font-size:12px;line-height:17px;color:#1a1a1a;letter-spacing:-0.785px;">Size</span>
<span class="t" id="h4" style="left:642px;top:322.500px;font-size:12px;line-height:17px;color:#1a1a1a;letter-spacing:-0.212px;">Creation Date</span>
<span class="t" id="h5" style="left:743px;top:322.500px;font-size:12px;line-height:17px;color:#1a1a1a;letter-spacing:0.069px;">Modification Date</span>
<div class="ab" style="left:288px;top:343px;width:574px;height:215px;overflow:hidden">
<div class="ab" style="left:-288px;top:-343px;width:879px;height:620px">
<div class="ab" style="left:308px;top:344px;width:554px;height:18px;background:#f5f5f5"></div>
<svg class="cb" style="left:312px;top:348px" width="11" height="11" viewBox="0 0 11 11"><rect x=".5" y=".5" width="10" height="10"/><path d="M2 5.4 4.6 8.5 9.2 2"/></svg>
<svg class="ab" style="left:332px;top:345.5px" width="12" height="15" viewBox="0 0 12 15"><path d="M.5 .5H8L11.5 4V14.5H.5Z" fill="#fff" stroke="#8a8a8a"/><path d="M8 .5V4H11.5" fill="#eee" stroke="#8a8a8a"/><rect x="3" y="6" width="6" height="6" fill="#1f6fc4"/><rect x="4.2" y="7.2" width="2.2" height="2" fill="#9fd0ff"/></svg>
<span class="t fr" style="left:353px;top:347px;color:#1a1a1a;letter-spacing:0.167px;">130758527...594_n.jpg</span>
<span class="t fr" style="left:491px;top:347px;color:#1a1a1a;letter-spacing:-0.311px;">File</span>
<span class="t fr" style="left:541.5px;top:347px;color:#1a1a1a;letter-spacing:-0.116px;">220.65 KB</span>
<span class="t fr" style="left:641px;top:347px;color:#1a1a1a;letter-spacing:0.367px;">Dec 11...:28 AM</span>
<span class="t fr" style="left:741.5px;top:347px;color:#1a1a1a;letter-spacing:0.336px;">Dec 11, ...11:28 AM</span>
<svg class="cb" style="left:312px;top:366px" width="11" height="11" viewBox="0 0 11 11"><rect x=".5" y=".5" width="10" height="10"/><path d="M2 5.4 4.6 8.5 9.2 2"/></svg>
<svg class="ab" style="left:330px;top:363px" width="16" height="16" viewBox="0 0 16 16"><path d="M3.5 .5H12L15.500 4V15.500H3.500Z" fill="#fff" stroke="#b08a8a"/><path d="M12 .5V4H15.500" fill="#f3e6e6" stroke="#b08a8a"/><rect x="0" y="3" width="10" height="3.600" fill="#c4262e"/><path d="M5.500 14.500C7.500 12 8.800 9.500 8.600 7.600C8.500 6.600 7.400 6.800 7.600 8C8 10 10.500 12 13 12C14.300 12 14 10.800 12.600 10.900C10 11.100 7.500 12.800 5.500 14.500Z" fill="none" stroke="#c4262e" stroke-width="1.100"/></svg>
<span class="t fr" style="left:353px;top:365px;color:#1a1a1a;letter-spacing:0.302px;">145941486...47445.pdf</span>
<span class="t fr" style="left:491px;top:365px;color:#1a1a1a;letter-spacing:-0.311px;">File</span>
<span class="t fr" style="left:541.5px;top:365px;color:#1a1a1a;letter-spacing:-0.109px;">42.52 KB</span>
<span class="t fr" style="left:641px;top:365px;color:#1a1a1a;letter-spacing:0.307px;">Sep 19...:47 AM</span>
<span class="t fr" style="left:741.5px;top:365px;color:#1a1a1a;letter-spacing:0.242px;">Sep 19, ...07:47 AM</span>
<div class="ab" style="left:308px;top:380px;width:554px;height:18px;background:#3390ff"></div>
<svg class="cb sel" style="left:312px;top:384px" width="11" height="11" viewBox="0 0 11 11"><rect x=".5" y=".5" width="10" height="10"/><path d="M2 5.4 4.6 8.5 9.2 2"/></svg>
<svg class="ab" style="left:332px;top:381.5px" width="12" height="15" viewBox="0 0 12 15"><path d="M.5 .5H8L11.5 4V14.5H.5Z" fill="#fff" stroke="#8a8a8a"/><path d="M8 .5V4H11.5" fill="#eee" stroke="#8a8a8a"/><rect x="3" y="6" width="6" height="6" fill="#1f6fc4"/><rect x="4.2" y="7.2" width="2.2" height="2" fill="#9fd0ff"/></svg>
<span class="t fr" style="left:353px;top:383px;color:#0b1f5c;letter-spacing:0.474px;">2.jpg</span>
<span class="t fr" style="left:491px;top:383px;color:#0b1f5c;letter-spacing:-0.311px;">File</span>
<span class="t fr" style="left:541.5px;top:383px;color:#0b1f5c;letter-spacing:-0.109px;">33.65 KB</span>
<span class="t fr" style="left:641px;top:383px;color:#0b1f5c;letter-spacing:0.174px;">Jun 23...:00 AM</span>
<span class="t fr" style="left:741.5px;top:383px;color:#0b1f5c;letter-spacing:0.189px;">Jun 23, ...07:00 AM</span>
<svg class="cb" style="left:312px;top:402px" width="11" height="11" viewBox="0 0 11 11"><rect x=".5" y=".5" width="10" height="10"/><path d="M2 5.4 4.6 8.5 9.2 2"/></svg>
<svg class="ab" style="left:330px;top:399px" width="16" height="16" viewBox="0 0 16 16"><path d="M3.5 .5H12L15.500 4V15.500H3.500Z" fill="#fff" stroke="#b08a8a"/><path d="M12 .5V4H15.500" fill="#f3e6e6" stroke="#b08a8a"/><rect x="0" y="3" width="10" height="3.600" fill="#c4262e"/><path d="M5.500 14.500C7.500 12 8.800 9.500 8.600 7.600C8.500 6.600 7.400 6.800 7.600 8C8 10 10.500 12 13 12C14.300 12 14 10.800 12.600 10.900C10 11.100 7.500 12.800 5.500 14.500Z" fill="none" stroke="#c4262e" stroke-width="1.100"/></svg>
<span class="t fr" style="left:353px;top:401px;color:#1a1a1a;letter-spacing:0.302px;">212987202...47445.pdf</span>
<span class="t fr" style="left:491px;top:401px;color:#1a1a1a;letter-spacing:-0.311px;">File</span>
<span class="t fr" style="left:541.5px;top:401px;color:#1a1a1a;letter-spacing:-0.109px;">43.47 KB</span>
<span class="t fr" style="left:641px;top:401px;color:#1a1a1a;letter-spacing:0.374px;">Nov 03...:43 AM</span>
<span class="t fr" style="left:741.5px;top:401px;color:#1a1a1a;letter-spacing:0.347px;">Nov 03, ...07:44 AM</span>
<div class="ab" style="left:308px;top:416px;width:554px;height:18px;background:#f5f5f5"></div>
<svg class="cb" style="left:312px;top:420px" width="11" height="11" viewBox="0 0 11 11"><rect x=".5" y=".5" width="10" height="10"/><path d="M2 5.4 4.6 8.5 9.2 2"/></svg>
<svg class="ab" style="left:332px;top:417.5px" width="12" height="15" viewBox="0 0 12 15"><path d="M.5 .5H8L11.5 4V14.5H.5Z" fill="#fff" stroke="#8a8a8a"/><path d="M8 .5V4H11.5" fill="#eee" stroke="#8a8a8a"/><rect x="3" y="6" width="6" height="6" fill="#1f6fc4"/><rect x="4.2" y="7.2" width="2.2" height="2" fill="#9fd0ff"/></svg>
<span class="t fr" style="left:353px;top:419px;color:#1a1a1a;letter-spacing:0.370px;">2kai0m.gif</span>
<span class="t fr" style="left:491px;top:419px;color:#1a1a1a;letter-spacing:-0.311px;">File</span>
<span class="t fr" style="left:541.5px;top:419px;color:#1a1a1a;letter-spacing:-0.116px;">179.39 KB</span>
<span class="t fr" style="left:641px;top:419px;color:#1a1a1a;letter-spacing:0.325px;">Oct 17...:02 AM</span>
<span class="t fr" style="left:741.5px;top:419px;color:#1a1a1a;letter-spacing:0.298px;">Oct 17, ...07:02 AM</span>
<svg class="cb" style="left:312px;top:438px" width="11" height="11" viewBox="0 0 11 11"><rect x=".5" y=".5" width="10" height="10"/><path d="M2 5.4 4.6 8.5 9.2 2"/></svg>
<svg class="ab" style="left:332px;top:435.5px" width="12" height="15" viewBox="0 0 12 15"><path d="M.5 .5H8L11.5 4V14.5H.5Z" fill="#fff" stroke="#8a8a8a"/><path d="M8 .5V4H11.5" fill="#eee" stroke="#8a8a8a"/><rect x="3" y="6" width="6" height="6" fill="#1f6fc4"/><rect x="4.2" y="7.2" width="2.2" height="2" fill="#9fd0ff"/></svg>
<span class="t fr" style="left:353px;top:437px;color:#1a1a1a;letter-spacing:0.210px;">2kaich.gif</span>
<span class="t fr" style="left:491px;top:437px;color:#1a1a1a;letter-spacing:-0.311px;">File</span>
<span class="t fr" style="left:541.5px;top:437px;color:#1a1a1a;letter-spacing:-0.116px;">192.73 KB</span>
<span class="t fr" style="left:641px;top:437px;color:#1a1a1a;letter-spacing:0.320px;">Oct 17...:14 AM</span>
<span class="t fr" style="left:741.5px;top:437px;color:#1a1a1a;letter-spacing:0.297px;">Oct 17, ...07:14 AM</span>
<div class="ab" style="left:308px;top:452px;width:554px;height:18px;background:#f5f5f5"></div>
<svg class="cb" style="left:312px;top:456px" width="11" height="11" viewBox="0 0 11 11"><rect x=".5" y=".5" width="10" height="10"/><path d="M2 5.4 4.6 8.5 9.2 2"/></svg>
<svg class="ab" style="left:332px;top:453.5px" width="12" height="15" viewBox="0 0 12 15"><path d="M.5 .5H8L11.5 4V14.5H.5Z" fill="#fff" stroke="#8a8a8a"/><path d="M8 .5V4H11.5" fill="#eee" stroke="#8a8a8a"/><rect x="3" y="6" width="6" height="6" fill="#1f6fc4"/><rect x="4.2" y="7.2" width="2.2" height="2" fill="#9fd0ff"/></svg>
<span class="t fr" style="left:353px;top:455px;color:#1a1a1a;letter-spacing:0.329px;">2nw6sy.gif</span>
<span class="t fr" style="left:491px;top:455px;color:#1a1a1a;letter-spacing:-0.311px;">File</span>
<span class="t fr" style="left:541.5px;top:455px;color:#1a1a1a;letter-spacing:-0.116px;">235.60 KB</span>
<span class="t fr" style="left:641px;top:455px;color:#1a1a1a;letter-spacing:0.330px;">Dec 01...:12 AM</span>
<span class="t fr" style="left:741.5px;top:455px;color:#1a1a1a;letter-spacing:0.305px;">Dec 01, ...06:12 AM</span>
<svg class="cb" style="left:312px;top:474px" width="11" height="11" viewBox="0 0 11 11"><rect x=".5" y=".5" width="10" height="10"/><path d="M2 5.4 4.6 8.5 9.2 2"/></svg>
<svg class="ab" style="left:332px;top:471.5px" width="12" height="15" viewBox="0 0 12 15"><path d="M.5 .5H8L11.5 4V14.5H.5Z" fill="#fff" stroke="#8a8a8a"/><path d="M8 .5V4H11.5" fill="#eee" stroke="#8a8a8a"/><rect x="3" y="6" width="6" height="6" fill="#1f6fc4"/><rect x="4.2" y="7.2" width="2.2" height="2" fill="#9fd0ff"/></svg>
<span class="t fr" style="left:353px;top:473px;color:#1a1a1a;letter-spacing:0.335px;">2nw8i5.gif</span>
<span class="t fr" style="left:491px;top:473px;color:#1a1a1a;letter-spacing:-0.311px;">File</span>
<span class="t fr" style="left:541.5px;top:473px;color:#1a1a1a;letter-spacing:-0.116px;">201.47 KB</span>
<span class="t fr" style="left:641px;top:473px;color:#1a1a1a;letter-spacing:0.330px;">Dec 01...:54 AM</span>
<span class="t fr" style="left:741.5px;top:473px;color:#1a1a1a;letter-spacing:0.305px;">Dec 01, ...06:54 AM</span>
<div class="ab" style="left:308px;top:488px;width:554px;height:18px;background:#f5f5f5"></div>
<svg class="cb" style="left:312px;top:492px" width="11" height="11" viewBox="0 0 11 11"><rect x=".5" y=".5" width="10" height="10"/><path d="M2 5.4 4.6 8.5 9.2 2"/></svg>
<svg class="ab" style="left:332px;top:489.5px" width="12" height="15" viewBox="0 0 12 15"><path d="M.5 .5H8L11.5 4V14.5H.5Z" fill="#fff" stroke="#8a8a8a"/><path d="M8 .5V4H11.5" fill="#eee" stroke="#8a8a8a"/><rect x="3" y="6" width="6" height="6" fill="#1f6fc4"/><rect x="4.2" y="7.2" width="2.2" height="2" fill="#9fd0ff"/></svg>
<span class="t fr" style="left:353px;top:491px;color:#1a1a1a;letter-spacing:0.474px;">2pcrym.gif</span>
<span class="t fr" style="left:491px;top:491px;color:#1a1a1a;letter-spacing:-0.311px;">File</span>
<span class="t fr" style="left:541.5px;top:491px;color:#1a1a1a;letter-spacing:-0.116px;">212.30 KB</span>
<span class="t fr" style="left:641px;top:491px;color:#1a1a1a;letter-spacing:0.333px;">Dec 19...:47 PM</span>
<span class="t fr" style="left:741.5px;top:491px;color:#1a1a1a;letter-spacing:0.307px;">Dec 19, ...04:47 PM</span>
<svg class="cb" style="left:312px;top:510px" width="11" height="11" viewBox="0 0 11 11"><rect x=".5" y=".5" width="10" height="10"/><path d="M2 5.4 4.6 8.5 9.2 2"/></svg>
<svg class="ab" style="left:332px;top:507.5px" width="12" height="15" viewBox="0 0 12 15"><path d="M.5 .5H8L11.5 4V14.5H.5Z" fill="#fff" stroke="#8a8a8a"/><path d="M8 .5V4H11.5" fill="#eee" stroke="#8a8a8a"/><rect x="3" y="6" width="6" height="6" fill="#1f6fc4"/><rect x="4.2" y="7.2" width="2.2" height="2" fill="#9fd0ff"/></svg>
<span class="t fr" style="left:353px;top:509px;color:#1a1a1a;letter-spacing:0.410px;">2pyrja.gif</span>
<span class="t fr" style="left:491px;top:509px;color:#1a1a1a;letter-spacing:-0.311px;">File</span>
<span class="t fr" style="left:541.5px;top:509px;color:#1a1a1a;letter-spacing:-0.116px;">278.17 KB</span>
<span class="t fr" style="left:641px;top:509px;color:#1a1a1a;letter-spacing:0.330px;">Dec 29...:51 AM</span>
<span class="t fr" style="left:741.5px;top:509px;color:#1a1a1a;letter-spacing:0.305px;">Dec 29, ...05:51 AM</span>
<div class="ab" style="left:308px;top:524px;width:554px;height:18px;background:#f5f5f5"></div>
<svg class="cb" style="left:312px;top:528px" width="11" height="11" viewBox="0 0 11 11"><rect x=".5" y=".5" width="10" height="10"/><path d="M2 5.4 4.6 8.5 9.2 2"/></svg>
<svg class="ab" style="left:332px;top:525.5px" width="12" height="15" viewBox="0 0 12 15"><path d="M.5 .5H8L11.5 4V14.5H.5Z" fill="#fff" stroke="#8a8a8a"/><path d="M8 .5V4H11.5" fill="#eee" stroke="#8a8a8a"/><rect x="3" y="6" width="6" height="6" fill="#1f6fc4"/><rect x="4.2" y="7.2" width="2.2" height="2" fill="#9fd0ff"/></svg>
<span class="t fr" style="left:353px;top:527px;color:#1a1a1a;letter-spacing:0.474px;">3.jpg</span>
<span class="t fr" style="left:491px;top:527px;color:#1a1a1a;letter-spacing:-0.311px;">File</span>
<span class="t fr" style="left:541.5px;top:527px;color:#1a1a1a;letter-spacing:-0.109px;">50.50 KB</span>
<span class="t fr" style="left:641px;top:527px;color:#1a1a1a;letter-spacing:0.322px;">Jun 23...:01 AM</span>
<span class="t fr" style="left:741.5px;top:527px;color:#1a1a1a;letter-spacing:0.299px;">Jun 23, ...07:01 AM</span>
<svg class="cb" style="left:312px;top:546px" width="11" height="11" viewBox="0 0 11 11"><rect x=".5" y=".5" width="10" height="10"/><path d="M2 5.4 4.6 8.5 9.2 2"/></svg>
<svg class="ab" style="left:331px;top:543px" width="14" height="16" viewBox="0 0 14 16"><path d="M7 0.5 10.6 12H3.4Z" fill="#f08a1c"/><path d="M5.6 5H8.4L9.3 8H4.7Z" fill="#fff"/><path d="M1.5 12H12.5L13.5 15.5H.5Z" fill="#e8791a"/></svg>
<span class="t fr" style="left:353px;top:545px;color:#1a1a1a;letter-spacing:0.310px;">30s.mp4</span>
<span class="t fr" style="left:491px;top:545px;color:#1a1a1a;letter-spacing:-0.311px;">File</span>
<span class="t fr" style="left:541.5px;top:545px;color:#1a1a1a;letter-spacing:-0.109px;">12.12 MB</span>
<span class="t fr" style="left:641px;top:545px;color:#1a1a1a;letter-spacing:0.330px;">Dec 17...:59 AM</span>
<span class="t fr" style="left:741.5px;top:545px;color:#1a1a1a;letter-spacing:0.305px;">Dec 17, ...10:00 AM</span>
</div></div>
<!-- file v scrollbar -->
<div class="ab" style="left:862px;top:322px;width:16px;height:236px;background:#f0f0f0"></div>
<div class="ab" style="left:863px;top:349px;width:14px;height:23px;background:#cdcdcd"></div>
<svg class="ab" style="left:862px;top:322px" width="16" height="16"><rect width="16" height="16" fill="#fff"/><path d="M3 11 8 6 13 11" fill="none" stroke="#9a9a9a" stroke-width="1"/></svg>
<svg class="ab" style="left:862px;top:542px" width="16" height="16"><rect width="16" height="16" fill="#fff"/><path d="M3 4 8 9 13 4" fill="none" stroke="#9a9a9a" stroke-width="1"/></svg>
<!-- deep scan -->
<svg class="ab" style="left:307px;top:579px" width="22" height="20" viewBox="0 0 22 20"><circle cx="8.500" cy="8.500" r="6.300" fill="none" stroke="#666" stroke-width="2.400"/><path d="M13 13 19.500 19" stroke="#666" stroke-width="3" stroke-linecap="round"/></svg>
<span class="t" id="deep" style="left:331px;top:579.500px;font-size:15px;line-height:20px;color:#1a1a1a;letter-spacing:-0.324px;">Deep Scan</span>
<span class="t" id="click" style="left:408px;top:579.500px;font-size:15px;line-height:20px;color:#0000ee;text-decoration:underline;letter-spacing:-0.299px;">Click here</span>
<!-- recover -->
<div class="ab" style="left:742px;top:573px;width:117px;height:32px;border-radius:2px;background:#1181e4"></div>
<span class="t" id="recover" style="left:773px;top:581px;font-size:15.500px;line-height:20px;color:#fff;letter-spacing:-0.388px;">Recover</span>
</body></html>
